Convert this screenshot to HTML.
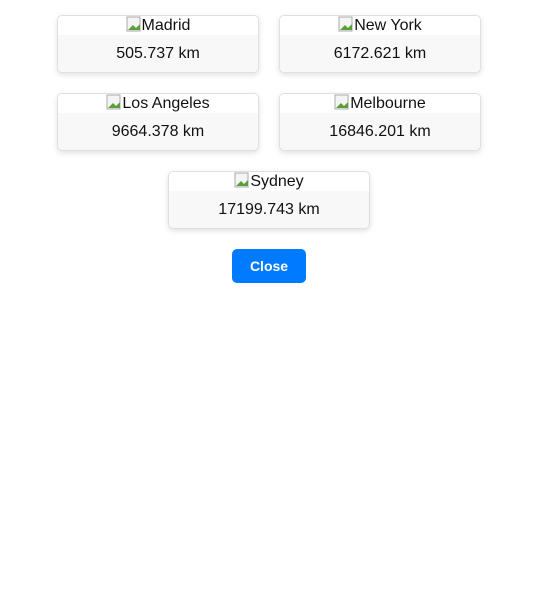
<!DOCTYPE html>
<html><head><style>
body{margin:0;background:#fff;font-family:"Liberation Sans",Arial,sans-serif;width:553px;height:600px;position:relative;overflow:hidden}
.card{position:absolute;width:200px;height:56px;border:1px solid #e0e0e0;border-radius:5px;box-shadow:0 2px 6px rgba(0,0,0,.12);overflow:hidden;background:#f8f8f8}
.t{background:#fff;height:19px;text-align:center;font-size:16px;line-height:19px;color:#111}
.t svg{vertical-align:-2px}
.d{text-align:center;font-size:16px;line-height:37px;color:#111}
.btn{position:absolute;left:232px;top:249px;width:74px;height:34px;background:#007bff;border-radius:5px;color:#fff;font-size:14px;font-weight:bold;text-align:center;line-height:34px}
</style></head><body>
<div class="card" style="left:57px;top:15px"><div class="t"><svg width="16" height="16"><rect x="1" y="1" width="13" height="14" fill="#f4f4f4" stroke="#aaa"/><path d="M2 14 L7 9 L10 12 L14 8 V14Z" fill="#5a9e3a"/></svg>Madrid</div><div class="d">505.737 km</div></div>
<div class="card" style="left:279px;top:15px"><div class="t"><svg width="16" height="16"><rect x="1" y="1" width="13" height="14" fill="#f4f4f4" stroke="#aaa"/><path d="M2 14 L7 9 L10 12 L14 8 V14Z" fill="#5a9e3a"/></svg>New York</div><div class="d">6172.621 km</div></div>
<div class="card" style="left:57px;top:93px"><div class="t"><svg width="16" height="16"><rect x="1" y="1" width="13" height="14" fill="#f4f4f4" stroke="#aaa"/><path d="M2 14 L7 9 L10 12 L14 8 V14Z" fill="#5a9e3a"/></svg>Los Angeles</div><div class="d">9664.378 km</div></div>
<div class="card" style="left:279px;top:93px"><div class="t"><svg width="16" height="16"><rect x="1" y="1" width="13" height="14" fill="#f4f4f4" stroke="#aaa"/><path d="M2 14 L7 9 L10 12 L14 8 V14Z" fill="#5a9e3a"/></svg>Melbourne</div><div class="d">16846.201 km</div></div>
<div class="card" style="left:168px;top:171px"><div class="t"><svg width="16" height="16"><rect x="1" y="1" width="13" height="14" fill="#f4f4f4" stroke="#aaa"/><path d="M2 14 L7 9 L10 12 L14 8 V14Z" fill="#5a9e3a"/></svg>Sydney</div><div class="d">17199.743 km</div></div>
<div class="btn">Close</div>
</body></html>
